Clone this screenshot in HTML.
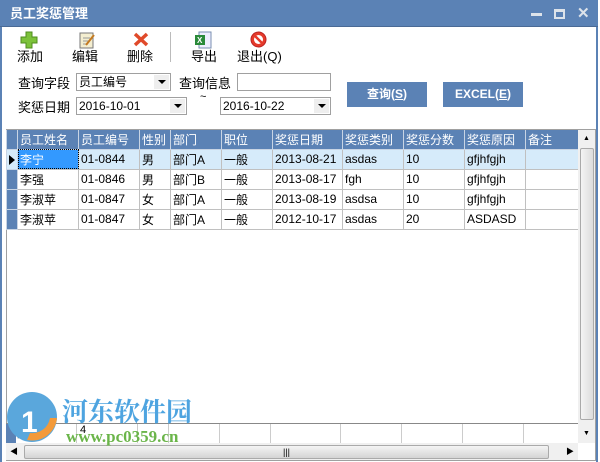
<!DOCTYPE html>
<html><head><meta charset="utf-8"><style>
*{margin:0;padding:0;box-sizing:border-box}
body{width:600px;height:462px;overflow:hidden;background:#fff;font-family:"Liberation Sans","Noto Sans CJK SC",sans-serif;font-size:12px;position:relative}
.a{position:absolute}
.win{left:0;top:0;width:598px;height:462px;border-left:2px solid #5b82b5;border-right:2px solid #5b82b5}
.title{left:0;top:0;width:598px;height:27px;background:#5b82b5;border-bottom:1px solid #4a6a95;color:#fff;font-weight:bold;font-size:13px;line-height:27px;padding-left:10px}
.tb{font-size:13px;color:#000}
.sel{border:1px solid #a0a0a0;height:18px;background:#fff;font-size:12px;line-height:16px;padding-left:2px}
.arr{position:absolute;right:1px;top:1px;width:15px;height:14px;background:#eee}
.arr:after{content:"";position:absolute;left:4px;top:5px;border-left:4px solid transparent;border-right:4px solid transparent;border-top:4px solid #000}
.btn{background:#5b82b5;color:#fff;font-weight:bold;text-align:center;line-height:25px;font-size:12px}
table{border-collapse:collapse;position:absolute;left:6px;top:130px;font-size:12px}
td{border:1px solid #c0c0c0;height:20px;padding-left:2px;white-space:nowrap;overflow:hidden}
th{background:#5b82b5;color:#fff;font-weight:normal;text-align:left;padding-left:2px;height:19px;border:1px solid #c8d4e4;border-top:none}
td.rh{background:#5b82b5;border-color:#c8d4e4;padding:0}
tr.s td{background:#d6ebfa}
</style></head><body>
<div class="a win"></div>
<div class="a title">员工奖惩管理</div>
<div class="a" style="left:531px;top:13px;width:11px;height:3px;background:#dde3ea"></div>
<div class="a" style="left:554px;top:9px;width:11px;height:10px;border:2px solid #dde3ea;border-top-width:3px"></div>
<div class="a" style="left:577px;top:4px;color:#dde3ea;font-weight:bold;font-size:15px">✕</div>
<svg class="a" style="left:20px;top:31px" width="18" height="18"><path d="M6 1h6v5h5v6h-5v5H6v-5H1V6h5z" fill="#7cc23a" stroke="#4f8c1e"/></svg>
<div class="a tb" style="left:17px;top:46px">添加</div>
<svg class="a" style="left:78px;top:31px" width="18" height="18"><rect x="2" y="2" width="13" height="15" fill="#f4eed0" stroke="#777"/><path d="M5 7h7M5 10h7M5 13h5" stroke="#999"/><path d="M8 14l8-10" stroke="#c47a20" stroke-width="2"/></svg>
<div class="a tb" style="left:72px;top:46px">编辑</div>
<svg class="a" style="left:133px;top:31px" width="16" height="16"><path d="M2 3l12 11M14 3L2 14" stroke="#e04a2a" stroke-width="3.5"/></svg>
<div class="a tb" style="left:127px;top:46px">删除</div>
<div class="a" style="left:170px;top:32px;width:1px;height:30px;background:#bbb"></div>
<svg class="a" style="left:194px;top:31px" width="18" height="18"><rect x="5" y="1" width="12" height="16" fill="#eef" stroke="#7a8fb0"/><rect x="1" y="4" width="10" height="10" fill="#2a8a3a"/><text x="3" y="12" font-size="8" fill="#fff" font-weight="bold">X</text></svg>
<div class="a tb" style="left:191px;top:46px">导出</div>
<svg class="a" style="left:250px;top:31px" width="17" height="17"><circle cx="8.5" cy="8.5" r="7.5" fill="#e53a2a" stroke="#b22"/><circle cx="8.5" cy="8.5" r="4.5" fill="#fff"/><path d="M5 5l7 7" stroke="#e53a2a" stroke-width="2.5"/></svg>
<div class="a tb" style="left:237px;top:46px">退出(Q)</div>
<div class="a tb" style="left:18px;top:73px">查询字段</div>
<div class="a sel" style="left:76px;top:73px;width:95px">员工编号<span class="arr"></span></div>
<div class="a tb" style="left:179px;top:73px">查询信息</div>
<div class="a sel" style="left:237px;top:73px;width:94px"></div>
<div class="a tb" style="left:18px;top:97px">奖惩日期</div>
<div class="a sel" style="left:76px;top:97px;width:111px">2016-10-01<span class="arr"></span></div>
<div class="a" style="left:200px;top:91px;font-size:11px">~</div>
<div class="a sel" style="left:220px;top:97px;width:111px">2016-10-22<span class="arr"></span></div>
<div class="a btn" style="left:347px;top:82px;width:80px;height:25px">查询(<u>S</u>)</div>
<div class="a btn" style="left:443px;top:82px;width:80px;height:25px">EXCEL(<u>E</u>)</div>
<div class="a" style="left:6px;top:129px;width:590px;height:332px;border:1px solid #a0a0a0"></div>
<table>
<tr><th style="width:11px;padding:0"></th><th style="width:61px">员工姓名</th><th style="width:61px">员工编号</th><th style="width:31px">性别</th><th style="width:51px">部门</th><th style="width:51px">职位</th><th style="width:70px">奖惩日期</th><th style="width:61px">奖惩类别</th><th style="width:61px">奖惩分数</th><th style="width:61px">奖惩原因</th><th style="width:53px">备注</th></tr>
<tr class="s"><td class="rh" style="position:relative"><span style="position:absolute;left:2px;top:5px;border-top:5px solid transparent;border-bottom:5px solid transparent;border-left:6px solid #000"></span></td><td style="background:#3399ff;color:#fff;outline:1px dotted #000;outline-offset:-1px">李宁</td><td>01-0844</td><td>男</td><td>部门A</td><td>一般</td><td>2013-08-21</td><td>asdas</td><td>10</td><td>gfjhfgjh</td><td></td></tr>
<tr><td class="rh"></td><td>李强</td><td>01-0846</td><td>男</td><td>部门B</td><td>一般</td><td>2013-08-17</td><td>fgh</td><td>10</td><td>gfjhfgjh</td><td></td></tr>
<tr><td class="rh"></td><td>李淑苹</td><td>01-0847</td><td>女</td><td>部门A</td><td>一般</td><td>2013-08-19</td><td>asdsa</td><td>10</td><td>gfjhfgjh</td><td></td></tr>
<tr><td class="rh"></td><td>李淑苹</td><td>01-0847</td><td>女</td><td>部门A</td><td>一般</td><td>2012-10-17</td><td>asdas</td><td>20</td><td>ASDASD</td><td></td></tr>
</table>
<div class="a" style="left:578px;top:130px;width:17px;height:313px;background:#f0f0f0"></div>
<div class="a" style="left:580px;top:148px;width:14px;height:272px;background:linear-gradient(90deg,#f4f4f4,#dcdcdc);border:1px solid #aaa;border-radius:2px"></div>
<div class="a" style="left:583px;top:135px;font-size:7px">▲</div>
<div class="a" style="left:583px;top:430px;font-size:7px">▼</div>
<div class="a" style="left:6px;top:423px;width:572px;height:1px;background:#888"></div>
<div class="a" style="left:6px;top:424px;width:10px;height:19px;background:#5b82b5"></div>
<div class="a" style="left:17px;top:425px;color:#555">总计</div>
<div class="a" style="left:80px;top:424px;font-size:11px">4</div>
<div class="a" style="left:16px;top:424px;width:562px;height:19px;background:linear-gradient(90deg,transparent 60px,#ccc 60px,#ccc 61px,transparent 61px,transparent 121px,#ccc 121px,#ccc 122px,transparent 122px,transparent 152px,#ccc 152px,#ccc 153px,transparent 153px,transparent 203px,#ccc 203px,#ccc 204px,transparent 204px,transparent 254px,#ccc 254px,#ccc 255px,transparent 255px,transparent 324px,#ccc 324px,#ccc 325px,transparent 325px,transparent 385px,#ccc 385px,#ccc 386px,transparent 386px,transparent 446px,#ccc 446px,#ccc 447px,transparent 447px,transparent 507px,#ccc 507px,#ccc 508px,transparent 508px)"></div>
<div class="a" style="left:6px;top:443px;width:572px;height:17px;background:#f0f0f0"></div>
<div class="a" style="left:24px;top:445px;width:525px;height:14px;background:linear-gradient(#f4f4f4,#d4d4d4);border:1px solid #aaa;border-radius:2px;text-align:center;font-size:9px;line-height:12px">|||</div>
<div class="a" style="left:10px;top:446px;font-size:8px">◀</div>
<div class="a" style="left:566px;top:446px;font-size:8px">▶</div>
<svg class="a" style="left:5px;top:390px" width="56" height="62"><circle cx="27" cy="27" r="25" fill="#5aa7dc"/><path d="M22 50a25 25 0 0 0 30-22l-7 0a18 18 0 0 1-20 15z" fill="#f39a3a"/><text x="16" y="42" font-size="30" fill="#fff" font-weight="bold">1</text></svg>
<div class="a" style="left:62px;top:392px;font-size:26px;font-weight:bold;color:#4ea4e0;font-family:'Noto Serif CJK SC',serif">河东软件园</div>
<div class="a" style="left:66px;top:427px;font-size:17px;font-weight:bold;color:#6bb54a;font-family:'Liberation Serif',serif">www.pc0359.cn</div>
</body></html>
